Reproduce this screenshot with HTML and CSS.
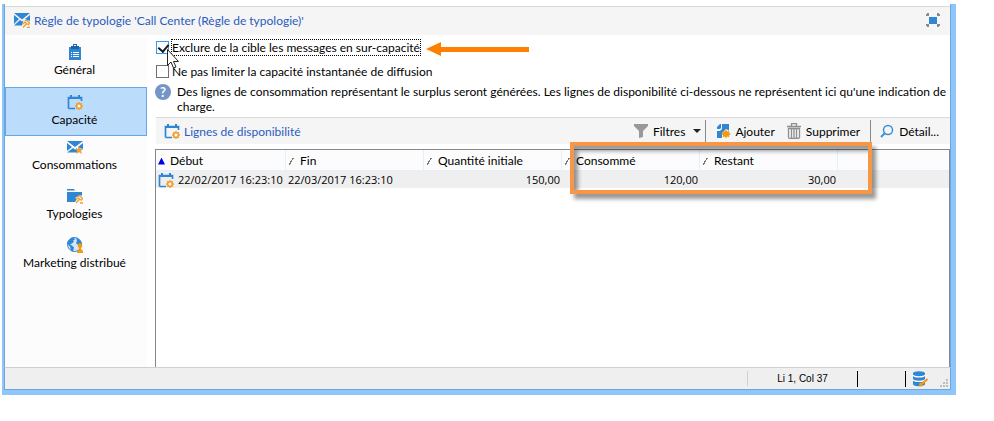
FILE: index.html
```html
<!DOCTYPE html>
<html lang="fr">
<head>
  <meta charset="utf-8">
  <title>Règle de typologie</title>
  <link rel="stylesheet" href="styles.css">
</head>
<body>

<!-- shared icons -->
<svg class="defs" width="0" height="0">
  <symbol id="calendar" viewBox="0 0 16 16">
    <path d="M1.500 14.500V3.500h13V7M1.500 14.500H8" fill="none" stroke="#2f86d3" stroke-width="1.700"/>
    <path d="M1 3h14v2H1zM3 1h2v4H3zM11 1h2v4h-2z" fill="#2f86d3"/>
    <path d="M12 8v8M8 12h8M9.200 9.200l5.600 5.600M14.800 9.200l-5.600 5.600" stroke="#f0a030" stroke-width="1.500"/>
    <circle cx="12" cy="12" r="2.300" fill="#fff" stroke="#f0a030" stroke-width="1.600"/>
  </symbol>
  <symbol id="gavel" viewBox="0 0 8 8">
    <path d="M2.500 1.500L4.500 0 7.500 3 6 5M1 4l2-2 2.500 2.500M4.500 3.500L1 7.500M5 7.500h3" fill="none" stroke="#f0a030" stroke-width="1.300"/>
  </symbol>
</svg>

<div class="window">
  <header class="titlebar">
    <svg class="icon" viewBox="0 0 16 16">
      <path d="M0 1h16L8 7.500z" fill="#2f86d3"/>
      <path d="M0 3l5 4-5 5zM16 3l-5 4 2 1 3 1zM0 13.500L6 8l2 1.500L9.500 8.500 8 13.500z" fill="#2f86d3"/>
      <use href="#gavel" x="8" y="8" width="8" height="8"/>
    </svg>
    <h1>Règle de typologie 'Call Center (Règle de typologie)'</h1>
    <button class="expand" aria-label="Agrandir">
      <svg class="icon" viewBox="0 0 16 16">
        <path d="M4 5h8v7H4z" fill="#2f86d3"/>
        <path d="M1 3h2V1M13 1v2h2M1 13h2v2M13 15v-2h2" fill="none" stroke="#8a8a8a" stroke-width="2"/>
      </svg>
    </button>
  </header>

  <div class="body">
    <nav class="sidebar">
      <a href="#general">
        <svg class="icon" viewBox="0 0 16 16">
          <path d="M2 3h12v13H2z" fill="#2f86d3"/>
          <path d="M4 2h2V0h4v2h2v3H4z" fill="#1c64ad"/>
          <path d="M7 1h2v1H7z" fill="#fff"/>
          <path d="M4 8.500h1M6 8.500h6M4 10.500h1M6 10.500h6M4 12.500h1M6 12.500h6" stroke="#fff"/>
        </svg>
        Général
      </a>
      <a href="#capacite" class="active">
        <svg class="icon"><use href="#calendar"/></svg>
        Capacité
      </a>
      <a href="#consommations">
        <svg class="icon" viewBox="0 0 16 16">
          <path d="M0 2h16L8 8z" fill="#2f86d3"/>
          <path d="M0 4l5 4-5 4zM16 4l-5 4 1 1 4 1zM0 13.500L6 9l2 1.500L10 9v4.500z" fill="#2f86d3"/>
          <path d="M12 7l1.300 3H16l-2 2 .8 3-2.800-1.700L9.200 15l.8-3-2-2h2.700z" fill="#f0a030"/>
        </svg>
        Consommations
      </a>
      <a href="#typologies">
        <svg class="icon" viewBox="0 0 16 16">
          <path d="M0 1h7l1 1.500H0zM0 4h15v4l-2-1-5 3 2 1-2 3H0z" fill="#2f86d3"/>
          <use href="#gavel" x="8" y="7" width="8" height="9"/>
        </svg>
        Typologies
      </a>
      <a href="#marketing">
        <svg class="icon" viewBox="0 0 16 16">
          <circle cx="7.500" cy="7.500" r="7" fill="#d3e6f7" stroke="#2f86d3"/>
          <path d="M1 4l3-3 3-.5 1 2-2 1 1 1-2 2-2 1 2 1 2 2-1 4-2-1-1-4-3-3zM9 1l4 2 2 4-2 2-2-1-2-2 1-2z" fill="#2f86d3"/>
          <circle cx="13" cy="8.500" r="2.300" fill="#f29a10"/>
          <path d="M12 10h2v2l2 2v2h-6v-2l2-2z" fill="#f29a10"/>
        </svg>
        Marketing distribué
      </a>
    </nav>

    <main class="content">
      <div class="option">
        <input type="checkbox" id="exclure" class="hot" checked>
        <label for="exclure" class="focused">Exclure de la cible les messages en sur-capacité</label>
        <svg class="arrow" viewBox="0 0 103 14">
          <path d="M0 7L15 0v5h88v5H15v4z" fill="#ff8000"/>
        </svg>
        <svg class="cursor" viewBox="0 0 12 20">
          <path d="M.5.5v16l3.500-3.500 2.500 6 2.500-1-2.500-5.500h5z" fill="#fff" stroke="#222"/>
        </svg>
      </div>
      <div class="option">
        <input type="checkbox" id="limite">
        <label for="limite">Ne pas limiter la capacité instantanée de diffusion</label>
      </div>

      <div class="help">
        <span class="help-mark">?</span>
        <p>Des lignes de consommation représentant le surplus seront générées. Les lignes de disponibilité ci-dessous ne représentent ici qu'une indication de<br>charge.</p>
      </div>

      <div class="toolbar">
        <svg class="icon"><use href="#calendar"/></svg>
        <h2>Lignes de disponibilité</h2>
        <div class="tools">
          <button class="filter">
            <svg class="icon" viewBox="0 0 16 16"><path d="M1 1h14v2l-5 5v6l-4 1V8L1 3z" fill="#999"/></svg>
            Filtres
            <span class="caret"></span>
          </button>
          <button class="add">
            <svg class="icon" viewBox="0 0 16 16">
              <path d="M7 1h7v6.500l-3-1.500-4 4v5H2V8h3l2-2z" fill="#2f86d3"/>
              <path d="M2 6V4l3-3h1v4L5 6z" fill="#2f86d3"/>
              <path d="M11 6.500l1.200 2 2-.7-.2 2 2 1.200-2 1.200.2 2-2-.7-1.200 2-1.200-2-2 .7.200-2-2-1.200 2-1.200-.2-2 2 .7z" fill="#f29a10"/>
            </svg>
            Ajouter
          </button>
          <button class="delete">
            <svg class="icon" viewBox="0 0 16 16">
              <path d="M1 3.500h14M5.500 3V.5h5V3M2.500 5.500h11v9l-1 1h-9l-1-1zM5.500 6v9M8 6v9M10.500 6v9" fill="none" stroke="#8f8f8f" stroke-width="1.300"/>
            </svg>
            Supprimer
          </button>
          <button class="detail">
            <svg class="icon" viewBox="0 0 16 16">
              <circle cx="9" cy="7" r="4.500" fill="none" stroke="#3b8fd8" stroke-width="1.500"/>
              <path d="M6 10l-4 4" stroke="#3b8fd8" stroke-width="2"/>
            </svg>
            Détail...
          </button>
        </div>
      </div>

      <div class="grid">
        <table>
          <colgroup>
            <col class="date"><col class="col"><col class="col"><col class="col"><col class="col"><col>
          </colgroup>
          <thead>
            <tr>
              <th class="sorted">Début</th>
              <th>Fin</th>
              <th>Quantité initiale</th>
              <th>Consommé</th>
              <th>Restant</th>
              <th class="empty"></th>
            </tr>
          </thead>
          <tbody>
            <tr>
              <td><span class="with-icon"><svg class="icon"><use href="#calendar"/></svg>22/02/2017 16:23:10</span></td>
              <td>22/03/2017 16:23:10</td>
              <td class="num">150,00</td>
              <td class="num">120,00</td>
              <td class="num">30,00</td>
              <td></td>
            </tr>
          </tbody>
        </table>
        <div class="highlight"></div>
      </div>
    </main>
  </div>

  <footer class="statusbar">
    <span class="position">Li 1, Col 37</span>
    <span class="slot"></span>
    <span class="slot-end">
      <svg class="icon" viewBox="0 0 16 16">
        <path d="M1 2v11c0 3 12 3 12 0V2z" fill="#2f86d3"/>
        <ellipse cx="7" cy="2.500" rx="6" ry="2.300" fill="#2f86d3"/>
        <path d="M1 4c1 2.500 11 2.500 12 0M1 8.500c1 2.500 11 2.500 12 0" fill="none" stroke="#fff" stroke-width="1.300"/>
        <path d="M15.500 8L10 13" stroke="#f29a10" stroke-width="2"/>
        <circle cx="9" cy="13.500" r="2" fill="#f29a10"/>
      </svg>
      <svg class="grip" viewBox="0 0 8 8">
        <path d="M6 0h2v2H6zM3 3h2v2H3zM6 3h2v2H6zM0 6h2v2H0zM3 6h2v2H3zM6 6h2v2H6z" fill="#bdbdbd"/>
      </svg>
    </span>
  </footer>
</div>

</body>
</html>
```

FILE: styles.css
```css
* {
  box-sizing: border-box;
}

body {
  margin: 0;
  background: white;
  color: black;
  font-family: Lato, "Open Sans", sans-serif;
  font-size: 12px;
  line-height: 15px;
}

h1, h2, p {
  margin: 0;
  font-size: 12px;
  font-weight: normal;
}

h1, h2 {
  color: #2b5bc0;
}

button {
  display: flex;
  align-items: center;
  padding: 0;
  border: none;
  background: none;
  color: inherit;
  font: inherit;
}

.defs {
  position: absolute;
}

.icon {
  flex: none;
  width: 16px;
  height: 16px;
}

.window {
  display: flex;
  flex-direction: column;
  height: calc(100vh - 30px);
  margin: 4px 38px 26px 2px;
  border: solid #8cc6fa;
  border-width: 0 5px 5px 2px;
}

.titlebar {
  display: flex;
  align-items: center;
  gap: 4px;
  height: 31px;
  padding: 0 9px;
  border: solid #6fa6da;
  border-width: 0 1px;
  background: linear-gradient(white 2px, #d9d9d9 2px, #d9d9d9 3px, #f5f5f5 3px);
}

.titlebar h1 {
  padding-top: 2px;
}

.expand {
  margin-left: auto;
}

.body {
  display: flex;
  flex: 1;
  border: solid #6fa6da;
  border-width: 0 1px;
}

.sidebar {
  display: flex;
  flex-direction: column;
  width: 142px;
  padding-top: 3px;
  background: #fcfcfc;
  background-clip: content-box;
}

.sidebar a {
  display: flex;
  flex-direction: column;
  align-items: center;
  gap: 2px;
  height: 49px;
  padding: 3px 3px 0 0;
  color: black;
  text-decoration: none;
  line-height: 16px;
}

.sidebar a:first-child,
.sidebar .active {
  padding-top: 6px;
}

.sidebar .active {
  border: 1px solid #66a7e8;
  background: #bbdcfb;
}

.content {
  display: flex;
  flex: 1;
  flex-direction: column;
  min-width: 0;
  padding-left: 8px;
}

.option {
  display: flex;
  position: relative;
  align-items: center;
  height: 23px;
  padding-left: 1px;
}

.option:first-child {
  height: 25px;
}

.option input {
  appearance: none;
  width: 13px;
  height: 13px;
  margin: 0 2px 0 0;
  border: 1px solid #707070;
  background: white;
}

.option .hot {
  border-color: #3399ff;
}

.option input:checked::before {
  content: "";
  display: block;
  width: 5px;
  height: 8px;
  margin: 0 3px;
  border: solid #1a1a1a;
  border-width: 0 2px 2px 0;
  transform: rotate(40deg);
}

.option label {
  border: 1px dotted transparent;
}

.option .focused {
  border-color: black;
}

.arrow {
  width: 103px;
  height: 14px;
  margin: 2px 0 0 5px;
}

.cursor {
  position: absolute;
  top: 14px;
  left: 12px;
  z-index: 1;
  width: 12px;
  height: 20px;
}

.help {
  display: flex;
  gap: 6px;
  height: 34px;
  padding-top: 1px;
  white-space: nowrap;
}

.help-mark {
  flex: none;
  width: 16px;
  height: 16px;
  border-radius: 50%;
  background: #7495c8;
  color: white;
  font-size: 13px;
  font-weight: bold;
  line-height: 16px;
  text-align: center;
}

.toolbar {
  display: flex;
  align-items: center;
  gap: 4px;
  height: 27px;
  margin-left: 1px;
  padding-left: 8px;
  border-top: 1px solid #d9d9d9;
  background: #f5f5f5;
}

.tools {
  display: flex;
  height: 22px;
  margin-left: auto;
}

.tools button {
  gap: 4px;
}

.tools .filter {
  padding-right: 4px;
  border-right: 1px solid #8a8a8a;
}

.tools .add {
  padding: 0 11px 0 9px;
}

.tools .delete {
  padding-right: 10px;
  border-right: 1px solid #8a8a8a;
}

.tools .detail {
  padding: 0 11px 0 8px;
}

.caret {
  margin-left: 4px;
  border: 4px solid transparent;
  border-top-color: #222;
  border-bottom: none;
}

.grid {
  flex: 1;
  position: relative;
  margin-top: 5px;
  border: 1px solid #828790;
  border-bottom: none;
}

table {
  width: 100%;
  border-spacing: 0;
  table-layout: fixed;
}

.date {
  width: 130px;
}

.col {
  width: 138px;
}

th {
  height: 21px;
  padding: 0 0 0 2px;
  border-right: 1px solid #e3effb;
  border-bottom: 1px solid #e3effb;
  background: #fcfcfc;
  font-weight: normal;
  text-align: left;
}

th::before {
  content: "";
  display: inline-block;
  width: 6px;
  height: 7px;
  margin-right: 6px;
  background: linear-gradient(120deg, transparent 44%, #777 44%, #777 58%, transparent 58%);
}

th.sorted::before {
  width: 7px;
  margin-right: 5px;
  background: #0000f0;
  clip-path: polygon(50% 0, 100% 100%, 0 100%);
}

th.empty {
  border-right: none;
}

th.empty::before {
  content: none;
}

td {
  height: 17px;
  padding: 0 2px;
  background: #efefef;
  font-family: "Open Sans", "Noto Sans", sans-serif;
  font-size: 11px;
  white-space: nowrap;
}

.num {
  text-align: right;
}

.with-icon {
  display: flex;
  align-items: center;
  gap: 4px;
}

.highlight {
  position: absolute;
  top: -8px;
  left: 414px;
  width: 302px;
  height: 52px;
  border: 4px solid #f79646;
  box-shadow: 4px 5px 4px rgba(0, 0, 0, 0.4), inset 4px 5px 4px rgba(0, 0, 0, 0.4);
}

.statusbar {
  display: flex;
  align-items: center;
  justify-content: flex-end;
  height: 23px;
  border: 1px solid #6fa6da;
  border-top-color: #d0d0d0;
  background: #efefef;
  font-family: "Liberation Sans", Arial, sans-serif;
  font-size: 10px;
}

.position {
  width: 110px;
  border-left: 1px solid #d0d0d0;
  text-align: center;
}

.slot {
  width: 48px;
  height: 16px;
  border-left: 1px solid black;
}

.slot-end {
  display: flex;
  align-items: center;
  width: 45px;
  height: 16px;
  padding-left: 6px;
  border-left: 1px solid black;
}

.grip {
  width: 8px;
  height: 8px;
  margin: 8px 0 0 12px;
}
```
